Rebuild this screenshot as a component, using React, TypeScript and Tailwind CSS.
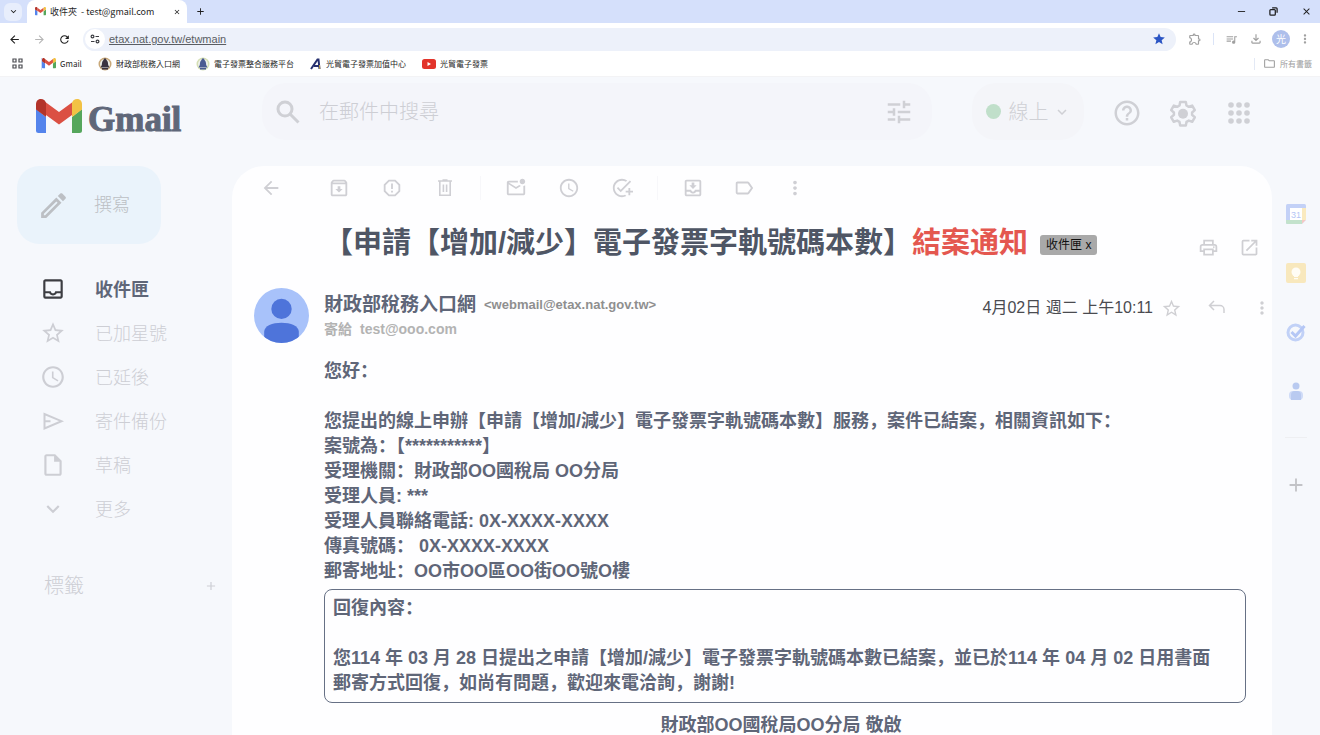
import type { ReactNode } from "react";
import {
  MdAccessTime,
  MdAdd,
  MdArrowBack,
  MdArrowForward,
  MdClose,
  MdExpandMore,
  MdHelpOutline,
  MdLabelOutline,
  MdLaunch,
  MdMoreVert,
  MdOutlineAddTask,
  MdOutlineArchive,
  MdOutlineEdit,
  MdOutlineExtension,
  MdOutlineFileDownload,
  MdOutlineFolder,
  MdOutlineInbox,
  MdOutlineInsertDriveFile,
  MdOutlineMarkEmailUnread,
  MdOutlineMoveToInbox,
  MdOutlinePrint,
  MdQueueMusic,
  MdRefresh,
  MdReportGmailerrorred,
  MdStar,
  MdStarBorder,
  MdTune,
} from "react-icons/md";

const folders: { label: string; icon: ReactNode; active?: boolean }[] = [
  { label: "收件匣", icon: <MdOutlineInbox size={26} />, active: true },
  { label: "已加星號", icon: <MdStarBorder size={26} /> },
  { label: "已延後", icon: <MdAccessTime size={26} /> },
  { label: "寄件備份", icon: <SendIcon /> },
  { label: "草稿", icon: <MdOutlineInsertDriveFile size={26} /> },
  { label: "更多", icon: <MdExpandMore size={26} /> },
];

const bookmarks = [
  { label: "Gmail", icon: <GmailMark className="w-3.5" /> },
  { label: "財政部稅務入口網", icon: <BellMark ring="#c9a878" fill="#3a3340" /> },
  { label: "電子發票整合服務平台", icon: <BellMark ring="#d5dfb4" fill="#4a5a92" /> },
  { label: "光貿電子發票加值中心", icon: <LetterMark /> },
  { label: "光貿電子發票", icon: <VideoMark /> },
];

export default function App() {
  return (
    <div className="flex h-screen flex-col overflow-hidden bg-[#f6f8fc] font-['Liberation_Sans','Noto_Sans_CJK_SC',sans-serif]">
      <BrowserChrome />
      <Header />
      <div className="flex min-h-0 flex-1">
        <Sidebar />
        <Message />
        <SideApps />
      </div>
    </div>
  );
}

function BrowserChrome() {
  return (
    <div className="shrink-0 bg-white font-['Noto_Sans_CJK_TC',sans-serif] text-[#1f1f1f]">
      <div className="flex h-[23px] items-center bg-[#d5e0fb]">
        <button aria-label="搜尋分頁" className="ml-1 flex h-[18px] w-[18px] items-center justify-center rounded-md bg-[#e8eefc]">
          <MdExpandMore size={11} />
        </button>
        <div className="ml-[5px] flex h-full w-[160px] items-center rounded-t-lg bg-white pr-1.5 pl-2">
          <GmailMark className="w-[11px]" />
          <span className="ml-1 flex-1 whitespace-pre text-[9px] leading-4">收件夾  - test@gmail.com</span>
          <button aria-label="關閉分頁"><MdClose size={8} /></button>
        </div>
        <button aria-label="新分頁" className="ml-2"><MdAdd size={11} /></button>
        <div className="ml-auto flex items-center gap-[23px] pr-2">
          <button aria-label="最小化" className="flex">
            <svg viewBox="0 0 10 10" className="h-[9px] w-[9px]" stroke="currentColor"><path d="M1 5h8" /></svg>
          </button>
          <button aria-label="還原" className="flex">
            <svg viewBox="0 0 10 10" className="h-[9px] w-[9px]" fill="none" stroke="currentColor" strokeWidth="1.4">
              <rect x="1" y="3" width="6" height="6" rx="1" />
              <path d="M3.5 1H8a1 1 0 0 1 1 1v4.5" />
            </svg>
          </button>
          <button aria-label="關閉" className="flex"><MdClose size={11} /></button>
        </div>
      </div>

      <div className="flex h-8 items-center px-2">
        <button aria-label="上一頁"><MdArrowBack size={13} /></button>
        <button aria-label="下一頁" className="ml-3 text-[#b5b5b5]"><MdArrowForward size={13} /></button>
        <button aria-label="重新載入" className="ml-3"><MdRefresh size={13} /></button>
        <div className="ml-3 flex h-[23px] flex-1 items-center rounded-full bg-[#edf1fa] pr-2.5 pl-0.5">
          <span className="flex h-5 w-5 items-center justify-center rounded-full bg-white">
            <SiteInfoIcon />
          </span>
          <input
            aria-label="網址"
            defaultValue="etax.nat.gov.tw/etwmain"
            className="ml-1 min-w-0 flex-1 bg-transparent font-['Liberation_Sans',sans-serif] text-[11px] text-[#5a5d63] underline outline-none"
          />
          <MdStar size={14} className="text-[#2b55c4]" />
        </div>
        <div className="ml-3 flex items-center text-[#a0a0a0]">
          <button aria-label="擴充功能"><MdOutlineExtension size={14} /></button>
          <span className="mx-[11px] h-3 w-px bg-[#dbe4f7]" />
          <button aria-label="媒體控制"><MdQueueMusic size={13} /></button>
          <button aria-label="下載" className="ml-[11px]"><MdOutlineFileDownload size={14} /></button>
          <button className="ml-[9px] h-[18px] w-[18px] rounded-full bg-[#aebfeb] text-[10px] leading-4 text-white">光</button>
          <button aria-label="選單" className="ml-2"><MdMoreVert size={14} /></button>
        </div>
      </div>

      <div className="flex h-[22px] items-center border-b border-[#f3f3f5] px-2 pb-1 text-[8px] leading-4">
        <button aria-label="應用程式" className="ml-1"><GridIcon /></button>
        <span className="ml-[18px] h-3 w-px bg-[#c9d8f7]" />
        <div className="flex items-center gap-4">
          {bookmarks.map((b) => (
            <a key={b.label} href="#" className="flex items-center gap-1">
              {b.icon}
              {b.label}
            </a>
          ))}
        </div>
        <span className="mr-2 ml-auto h-3 w-px bg-[#e3e9f5]" />
        <button className="flex items-center gap-1 text-[#a0a0a0]">
          <MdOutlineFolder size={13} />
          所有書籤
        </button>
      </div>
    </div>
  );
}

function Header() {
  return (
    <header className="flex h-[89px] shrink-0 items-start pt-1.5 pr-[66px] text-[#cfd0d5]">
      <a href="#" className="flex h-[57px] w-[262px] items-center gap-1.5 pl-9">
        <GmailMark className="mt-2 w-[46px]" />
        <span className="mt-4 font-['Liberation_Serif',serif] text-[35px] leading-9 font-bold text-[#5f6779] [-webkit-text-stroke:1px_#5f6779]">
          Gmail
        </span>
      </a>
      <div className="flex h-[57px] flex-1 items-center rounded-3xl bg-[#f4f5fa] pr-[18px] pl-[11px]">
        <SearchIcon />
        <input
          aria-label="在郵件中搜尋"
          placeholder="在郵件中搜尋"
          className="ml-4 min-w-0 flex-1 bg-transparent text-[20px] font-light outline-none placeholder:text-[#cdced4]"
        />
        <button aria-label="顯示搜尋選項"><MdTune size={30} /></button>
      </div>
      <button className="ml-10 flex h-[57px] w-[112px] items-center justify-center rounded-3xl bg-[#f4f5f9] text-[20px] font-light">
        <span className="mr-2 h-[15px] w-[15px] rounded-full bg-[#c0dfca]" />
        線上
        <MdExpandMore size={18} className="ml-1" />
      </button>
      <div className="ml-7 flex h-[57px] items-center gap-[26px] pt-0.5">
        <button aria-label="說明"><MdHelpOutline size={30} /></button>
        <button aria-label="設定"><GearIcon /></button>
        <button aria-label="Google 應用程式"><DotsIcon /></button>
      </div>
    </header>
  );
}

function Sidebar() {
  return (
    <aside className="w-[232px] shrink-0 font-light text-[#cdced4]">
      <button className="ml-[17px] flex h-[78px] w-36 items-center rounded-[22px] bg-[#eaf3fb] pl-5 text-[18px] text-[#bcbfc4]">
        <MdOutlineEdit size={33} />
        <span className="ml-6">撰寫</span>
      </button>
      <nav className="mt-[23px] text-[18px]">
        {folders.map((f) => (
          <a
            key={f.label}
            href="#"
            className={`flex h-11 items-center pl-10 ${f.active ? "font-bold text-[#5f6678]" : ""}`}
          >
            <span className={f.active ? "text-[#3c3d42]" : ""}>{f.icon}</span>
            <span className="ml-[29px] pt-0.5">{f.label}</span>
          </a>
        ))}
      </nav>
      <div className="mt-10 flex items-center justify-between pr-3.5 pl-11">
        <h2 className="text-[20px]">標籤</h2>
        <button aria-label="建立新標籤"><MdAdd size={14} /></button>
      </div>
    </aside>
  );
}

function Message() {
  return (
    <main className="min-w-0 flex-1 overflow-hidden rounded-t-[32px] bg-[#fefeff]">
      <div className="flex h-11 items-center pl-7 text-[#cfcfd4]">
        <button aria-label="返回"><MdArrowBack size={22} /></button>
        <div className="ml-[46px] flex items-center gap-[31px]">
          <button aria-label="封存"><MdOutlineArchive size={22} /></button>
          <button aria-label="回報為垃圾郵件"><MdReportGmailerrorred size={22} /></button>
          <button aria-label="刪除"><TrashIcon /></button>
        </div>
        <span className="mx-6 h-6 w-px bg-[#f7f7fa]" />
        <div className="flex items-center gap-[31px]">
          <button aria-label="標示為未讀"><MdOutlineMarkEmailUnread size={22} /></button>
          <button aria-label="延後"><MdAccessTime size={22} /></button>
          <button aria-label="新增至工作清單"><MdOutlineAddTask size={22} /></button>
        </div>
        <span className="mx-6 h-6 w-px bg-[#f7f7fa]" />
        <div className="flex items-center gap-[29px]">
          <button aria-label="移至"><MdOutlineMoveToInbox size={22} /></button>
          <button aria-label="標籤"><MdLabelOutline size={22} /></button>
          <button aria-label="更多"><MdMoreVert size={22} /></button>
        </div>
      </div>

      <div className="flex h-[66px] items-center pr-3 pl-[92px]">
        <h1 className="text-[29px] leading-10 font-bold whitespace-nowrap text-[#4f5665]">
          【申請【增加/減少】電子發票字軌號碼本數】<span className="text-[#e4574f]">結案通知</span>
        </h1>
        <button className="mt-1 ml-3 h-5 shrink-0 rounded-[3px] bg-[#a9a9a9] px-1.5 text-[12px] leading-5 whitespace-nowrap text-[#111]">
          收件匣 x
        </button>
        <div className="mt-2 ml-auto flex gap-5 text-[#cfcfd3]">
          <button aria-label="列印"><MdOutlinePrint size={21} /></button>
          <button aria-label="在新視窗中開啟"><MdLaunch size={21} /></button>
        </div>
      </div>

      <div className="mt-3 flex pl-[22px]">
        <Avatar />
        <div className="mt-[3px] ml-[15px]">
          <div className="flex h-7 items-center gap-2 whitespace-nowrap">
            <span className="text-[19px] font-bold text-[#5f6678]">財政部稅務入口網</span>
            <span className="text-[13px] font-bold text-[#8f8f8f]">&lt;webmail@etax.nat.gov.tw&gt;</span>
          </div>
          <div className="flex h-5 items-center gap-2 text-[14px] font-bold text-[#b3b3b3]">
            <span>寄給</span>
            <span>test@ooo.com</span>
          </div>
        </div>
        <div className="mt-1.5 ml-auto flex h-7 items-center text-[#cfcfd3]">
          <time className="text-[16px] whitespace-nowrap text-[#4a4b50]">4月02日 週二 上午10:11</time>
          <button aria-label="加星號" className="ml-2"><MdStarBorder size={21} /></button>
          <button aria-label="回覆" className="ml-[25px]"><ReplyIcon /></button>
          <button aria-label="更多" className="ml-[25px]"><MdMoreVert size={20} /></button>
        </div>
      </div>

      <article className="mt-4 mr-[26px] ml-[92px] text-[18px] leading-[25px] font-bold text-[#5f6678]">
        <p className="mb-[25px]">您好：</p>
        <p>您提出的線上申辦【申請【增加/減少】電子發票字軌號碼本數】服務，案件已結案，相關資訊如下：</p>
        <p>案號為：【***********】</p>
        <p>受理機關：財政部OO國稅局 OO分局</p>
        <p>受理人員: ***</p>
        <p>受理人員聯絡電話: 0X-XXXX-XXXX</p>
        <p>傳真號碼： 0X-XXXX-XXXX</p>
        <p>郵寄地址：OO市OO區OO街OO號O樓</p>
        <section className="mt-[5px] rounded-lg border border-[#667085] pt-1.5 pr-6 pb-1.5 pl-2">
          <p className="mb-[25px]">回復內容：</p>
          <p>
            您114 年 03 月 28 日提出之申請【增加/減少】電子發票字軌號碼本數已結案，並已於114 年 04 月 02
            日用書面郵寄方式回復，如尚有問題，歡迎來電洽詢，謝謝!
          </p>
        </section>
        <p className="mt-2.5 pr-2 text-center">財政部OO國稅局OO分局 敬啟</p>
      </article>
    </main>
  );
}

function SideApps() {
  return (
    <aside className="flex w-12 shrink-0 flex-col items-center pt-[38px]">
      <div className="flex flex-col items-center gap-[39px]">
        <AppButton label="日曆">
          <rect x="0" y="0" width="20" height="20" rx="1.5" fill="#c3d1f7" />
          <path d="M16 4h4v12h-4z" fill="#faeabf" />
          <path d="M0 16h16v4H1.5A1.5 1.5 0 0 1 0 18.5z" fill="#c3e2cc" />
          <path d="M16 16h4l-4 4z" fill="#f5c9c4" />
          <path d="M20 16v4h-4z" fill="#f6f8fc" />
          <path d="M4 4h12v12H4z" fill="#fff" />
          <text x="10" y="13.5" fontSize="9" textAnchor="middle" fill="#b4c5f5">31</text>
        </AppButton>
        <AppButton label="Keep">
          <rect width="20" height="20" rx="2" fill="#f8e8bd" />
          <circle cx="10" cy="9" r="4.5" fill="#fffdf6" />
          <path d="M8 12h4v2H8zM8 15h4v1.2H8z" fill="#fffdf6" />
        </AppButton>
        <AppButton label="Tasks">
          <circle cx="9.5" cy="10.5" r="7.5" fill="none" stroke="#c1d1f7" strokeWidth="3" />
          <path d="M5.5 10l4 4 9-10" fill="none" stroke="#b5c7f5" strokeWidth="3" />
        </AppButton>
        <AppButton label="聯絡人">
          <circle cx="10" cy="5" r="3.5" fill="#b9caf0" />
          <rect x="3" y="10" width="14" height="9" rx="4" fill="#cfdbf7" />
          <path d="M5 19v-5a4 4 0 0 1 4-4h2a4 4 0 0 1 4 4v5z" fill="#b9caf0" />
        </AppButton>
      </div>
      <span className="mt-9 h-px w-[22px] bg-[#eeeff2]" />
      <button aria-label="取得外掛程式" className="mt-9 text-[#c2c3c7]"><MdAdd size={22} /></button>
    </aside>
  );
}

function AppButton({ label, children }: { label: string; children: ReactNode }) {
  return (
    <button aria-label={label}>
      <svg viewBox="0 0 20 20" className="block h-5 w-5">{children}</svg>
    </button>
  );
}

function Avatar() {
  return (
    <svg viewBox="0 0 54 54" className="h-[55px] w-[55px] shrink-0">
      <clipPath id="avatar">
        <circle cx="27" cy="27" r="27" />
      </clipPath>
      <g clipPath="url(#avatar)">
        <rect width="54" height="54" fill="#a8c2fa" />
        <circle cx="27" cy="20.5" r="10" fill="#4e74da" />
        <path d="M10 54V43c0-6 8-9 17-9s17 3 17 9v11z" fill="#4e74da" />
      </g>
    </svg>
  );
}

function GmailMark({ className }: { className: string }) {
  return (
    <svg viewBox="0 0 46 34" className={`shrink-0 ${className}`}>
      <path d="M0 10l10 8v16H2.5A2.5 2.5 0 0 1 0 31.5z" fill="#5484ec" />
      <path d="M46 10l-10 8v16h7.5a2.5 2.5 0 0 0 2.5-2.5z" fill="#55a65c" />
      <path d="M10 3.5L23 13l13-9.5V16L23 25.5 10 16z" fill="#db5043" />
      <path d="M0 10.5V5c0-4.5 5-6.5 8.5-3.700L10 3.500V18z" fill="#b3342a" />
      <path d="M46 10.5V5c0-4.500-5-6.500-8.500-3.700L36 3.500V18z" fill="#f2c244" />
    </svg>
  );
}

function BellMark({ ring, fill }: { ring: string; fill: string }) {
  return (
    <svg viewBox="0 0 14 14" className="h-3.5 w-3.5 shrink-0">
      <circle cx="7" cy="7" r="6.5" fill={ring} />
      <circle cx="7" cy="7" r="5" fill="#eef0ea" />
      <path d="M6 1.5h2l.5 1.5C10 4 10 6 10.200 8l1.300 2.500h-9L3.800 8C4 6 4 4 5.500 3z" fill={fill} />
      <path d="M4 11h6v1.500H4z" fill={fill} />
    </svg>
  );
}

function LetterMark() {
  return (
    <svg viewBox="0 0 12 12" className="h-3 w-3 shrink-0" fill="none">
      <path d="M1 11L7.5 1.5h1L9.5 11M4 8h5" stroke="#27306e" strokeWidth="2" />
      <path d="M9.5 7l.3 4" stroke="#c9a94f" strokeWidth="1" />
    </svg>
  );
}

function VideoMark() {
  return (
    <svg viewBox="0 0 14 10" className="h-2.5 w-3.5 shrink-0">
      <rect width="14" height="10" rx="2.5" fill="#e2342b" />
      <path d="M5.5 3l3.5 2-3.5 2z" fill="#fff" />
    </svg>
  );
}

function SiteInfoIcon() {
  return (
    <svg viewBox="0 0 10 10" className="h-2.5 w-2.5" fill="none" stroke="#3c3d42" strokeWidth="1.2">
      <circle cx="2.5" cy="2.5" r="1.4" />
      <path d="M5.5 2.5H9M1 7.5h3.5" />
      <circle cx="7.5" cy="7.5" r="1.4" />
    </svg>
  );
}

function GridIcon() {
  return (
    <svg viewBox="0 0 11 11" className="h-[11px] w-[11px]" fill="none" stroke="#4a4b50" strokeWidth="1.2">
      <path d="M1 1h3v3H1zM7 1h3v3H7zM1 7h3v3H1zM7 7h3v3H7z" />
    </svg>
  );
}

function SearchIcon() {
  return (
    <svg viewBox="0 0 30 30" className="h-[30px] w-[30px] shrink-0" fill="none" stroke="currentColor" strokeWidth="3">
      <circle cx="12" cy="12" r="7" />
      <path d="M17 17l8.500 8.500" />
    </svg>
  );
}

function GearIcon() {
  return (
    <svg viewBox="0 0 30 30" className="h-[30px] w-[30px]" fill="none" stroke="currentColor" strokeWidth="2.5" strokeLinejoin="round">
      <path d="M12.200 4h5.600l.7 3.500 2.300 1.300 3.400-1.200 2.600 4.500-2.700 2.400v2.400l2.700 2.400-2.600 4.500-3.400-1.200-2.300 1.300-.7 3.500h-5.600l-.7-3.500-2.300-1.300-3.400 1.200-2.600-4.500 2.700-2.400v-2.400l-2.700-2.400 2.600-4.500 3.400 1.200 2.300-1.300z" />
      <circle cx="15" cy="15.7" r="5" fill="currentColor" stroke="none" />
    </svg>
  );
}

function DotsIcon() {
  return (
    <svg viewBox="0 0 30 30" className="h-[30px] w-[30px]" fill="currentColor">
      {[7, 15, 23].map((y) => [7, 15, 23].map((x) => <circle key={`${x}-${y}`} cx={x} cy={y} r="2.8" />))}
    </svg>
  );
}

function SendIcon() {
  return (
    <svg viewBox="0 0 26 26" className="h-[26px] w-[26px]" fill="none" stroke="currentColor" strokeWidth="2">
      <path d="M4.5 6v14.5L21.5 13.2zM4.5 13.2h6" />
    </svg>
  );
}

function TrashIcon() {
  return (
    <svg viewBox="0 0 22 22" className="h-[22px] w-[22px]" fill="none" stroke="currentColor" strokeWidth="1.6">
      <path d="M4 4h14M8.5 3h5M5.8 4.5v13.7h10.400V4.500M9.400 7.500V15M12.600 7.500V15" />
    </svg>
  );
}

function ReplyIcon() {
  return (
    <svg viewBox="0 0 20 20" className="h-5 w-5" fill="none" stroke="currentColor" strokeWidth="1.5">
      <path d="M7 3L2.5 7.5 7 12M2.5 7.5H13a4 4 0 0 1 4 4V15" />
    </svg>
  );
}
